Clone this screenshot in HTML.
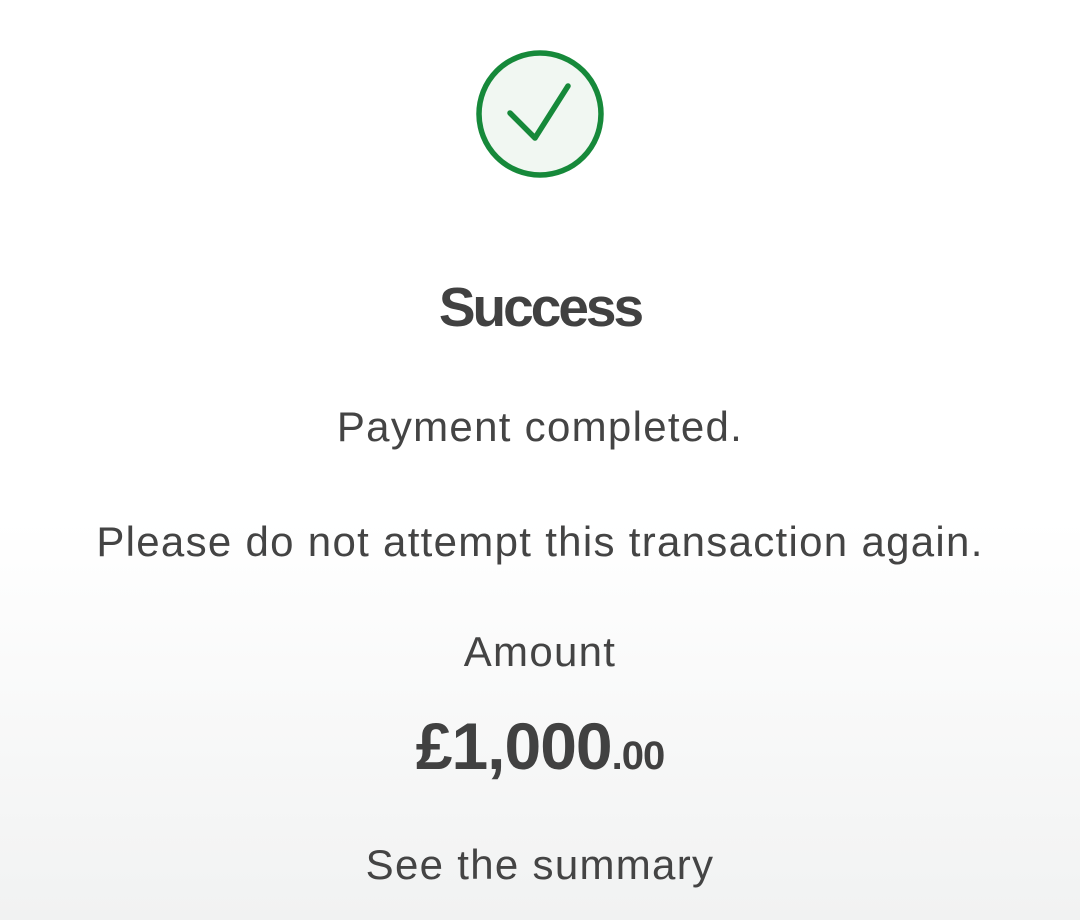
<!DOCTYPE html>
<html><head><meta charset="utf-8"><style>
html,body{margin:0;padding:0}
body{width:1080px;height:920px;overflow:hidden;position:relative;font-family:"Liberation Sans",sans-serif;color:#444;
background:linear-gradient(to bottom,#fff 0,#fff 520px,#f1f2f2 920px);}
.t{position:absolute;left:0;width:1080px;text-align:center;white-space:nowrap;line-height:1}
.r{font-size:42px;letter-spacing:1.3px}
</style></head><body>
<svg style="position:absolute;left:0;top:0" width="1080" height="200">
<circle cx="540" cy="114" r="61" fill="#f1f7f2" stroke="#16893a" stroke-width="5.5"/>
<path d="M510 113 L535 138 L568 86" fill="none" stroke="#16893a" stroke-width="5.5" stroke-linecap="round" stroke-linejoin="round"/>
</svg>
<div class="t" style="top:280px;font-size:55px;font-weight:bold;letter-spacing:-3px;color:#414141">Success</div>
<div class="t r" style="top:406px">Payment completed.</div>
<div class="t r" style="top:521px">Please do not attempt this transaction again.</div>
<div class="t r" style="top:631px">Amount</div>
<div class="t" style="top:713px;font-size:66px;font-weight:bold;letter-spacing:-1px;color:#414141">£1,000<span style="font-size:40px">.00</span></div>
<div class="t r" style="top:844px">See the summary</div>
</body></html>
